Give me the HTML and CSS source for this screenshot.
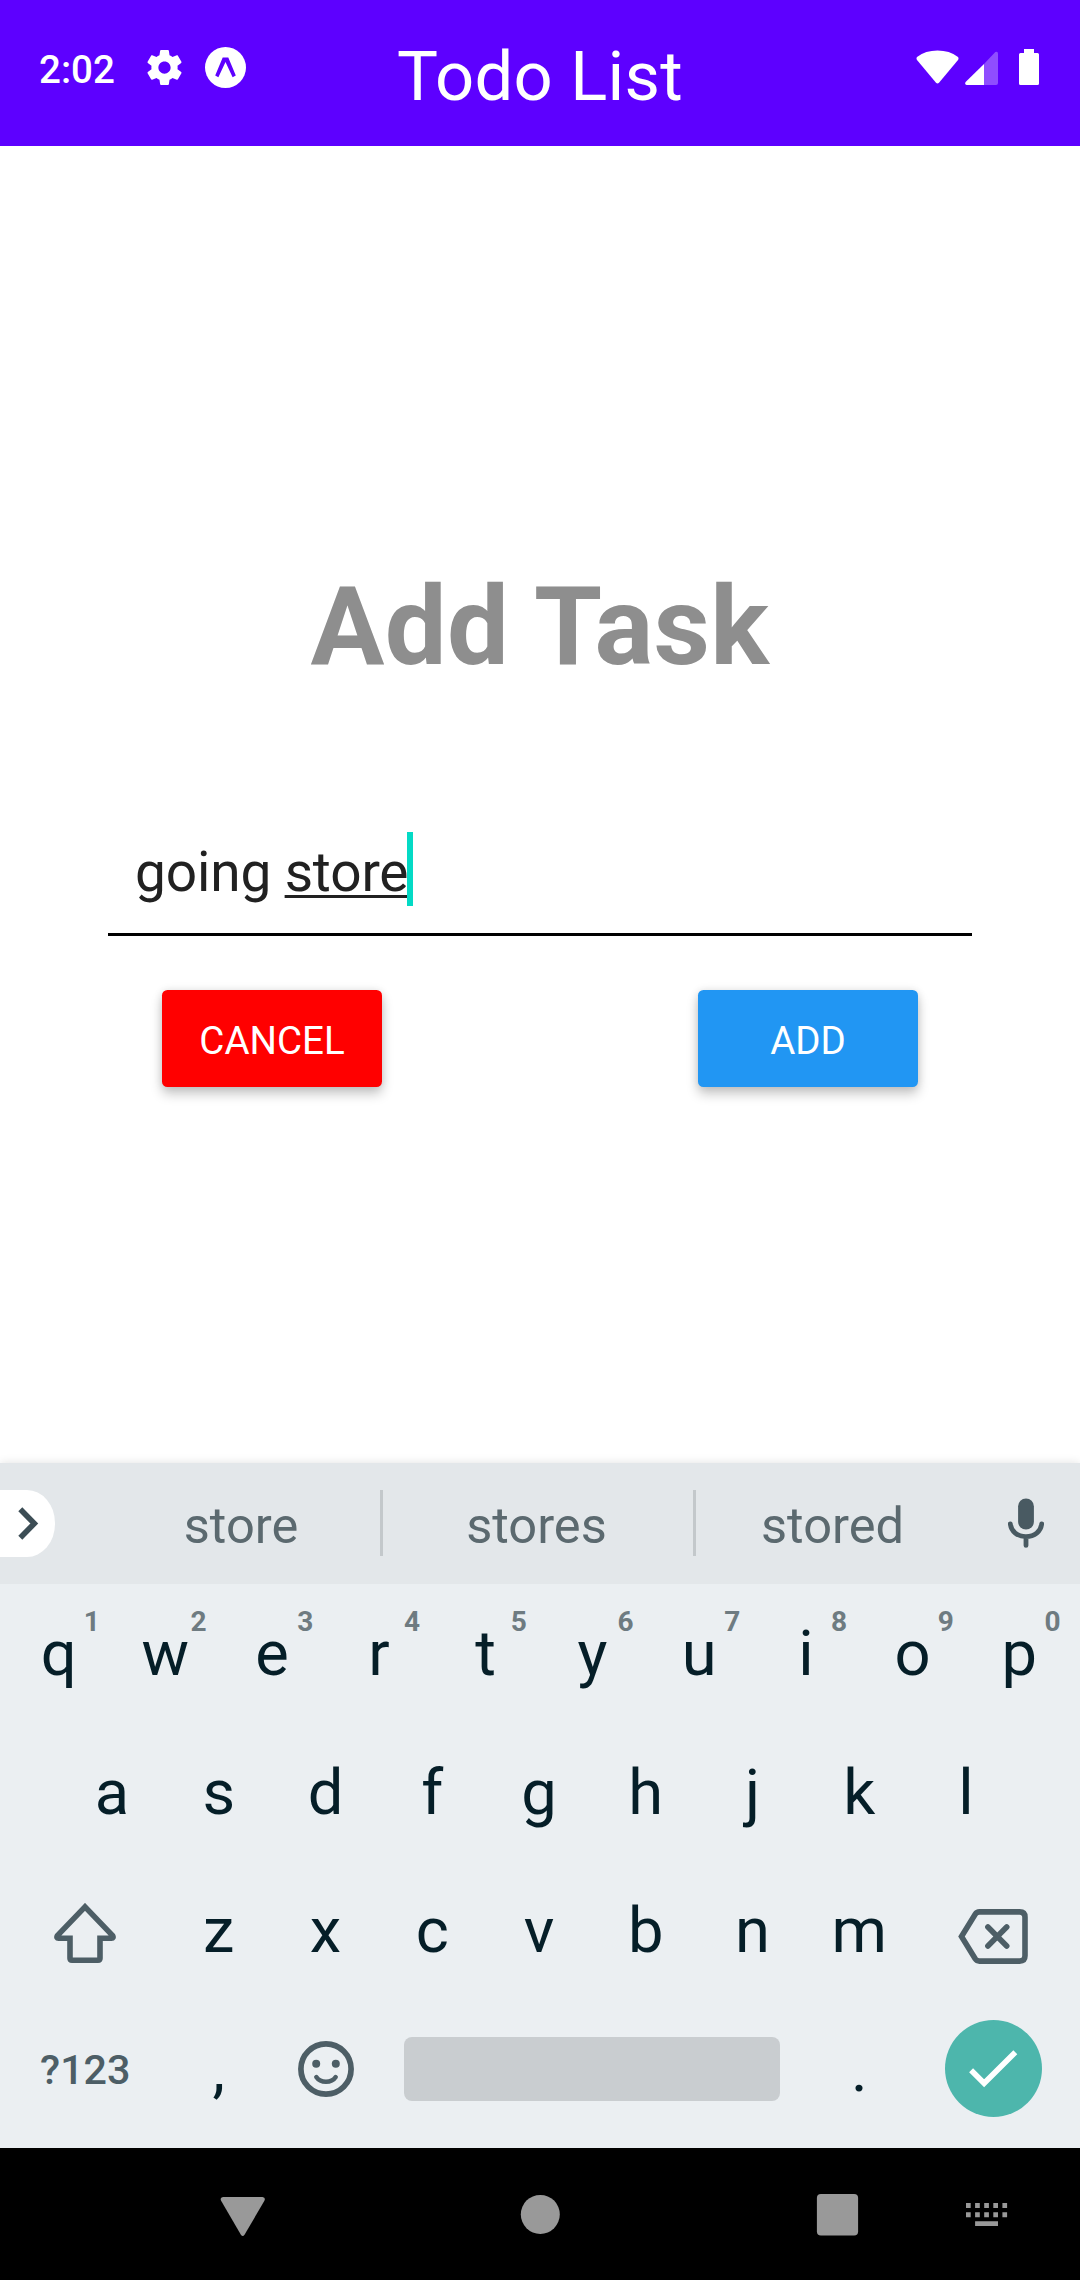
FILE: index.html
```html
<!DOCTYPE html>
<html lang="en">
<head>
<meta charset="utf-8">
<title>Todo List</title>
<link rel="stylesheet" href="styles.css">
</head>
<body>
<div class="screen">
  <header class="header">
    <div class="status-left">
      <span class="clock">2:02</span>
      <svg class="gear" viewBox="2 2 20 20"><path fill-rule="evenodd" d="M19.43 12.98c.04-.32.07-.64.07-.98s-.03-.66-.07-.98l2.11-1.65c.19-.15.24-.42.12-.64l-2-3.46c-.12-.22-.39-.3-.61-.22l-2.49 1c-.52-.4-1.08-.73-1.69-.98l-.38-2.65C14.46 2.18 14.25 2 14 2h-4c-.25 0-.46.18-.49.42l-.38 2.65c-.61.25-1.17.59-1.69.98l-2.49-1c-.23-.09-.49 0-.61.22l-2 3.46c-.13.22-.07.49.12.64l2.11 1.65c-.04.32-.07.65-.07.98s.03.66.07.98l-2.11 1.65c-.19.15-.24.42-.12.64l2 3.46c.12.22.39.3.61.22l2.49-1c.52.4 1.08.73 1.69.98l.38 2.65c.03.24.24.42.49.42h4c.25 0 .46-.18.49-.42l.38-2.65c.61-.25 1.17-.59 1.69-.98l2.49 1c.23.09.49 0 .61-.22l2-3.46c.12-.22.07-.49-.12-.64l-2.11-1.65zM12 15.5c-1.93 0-3.5-1.57-3.5-3.5s1.57-3.5 3.5-3.5 3.5 1.57 3.5 3.5-1.57 3.5-3.5 3.5z"/></svg>
      <svg class="expo" viewBox="0 0 41 41"><circle cx="20.5" cy="20.5" r="20.5"/><path class="expo-mark" d="M10.2 28.4 17.7 10.4H23.3L30.8 28.4 27.6 30.2 20.5 15 13.4 30.2Z"/></svg>
    </div>
    <h1 class="title">Todo List</h1>
    <div class="status-right">
      <svg class="wifi" viewBox="0 0 43 34"><path d="M1 7Q9.5.6 21.5.6T42 7Q43 8.3 42 10L23 32.8Q21.5 34.2 20 32.8L1 10Q0 8.3 1 7Z"/></svg>
      <svg class="signal" viewBox="0 0 33 34"><path class="signal-dim" d="M19 13 30.3 1Q33 0 33 2.8V32Q33 34 31 34H19Z"/><path d="M19 13V34H1.6Q-.6 33.2.6 31Z"/></svg>
      <svg class="battery" viewBox="0 0 20 36"><path d="M5 0H15V4H18.5Q20 4 20 5.5V34.5Q20 36 18.5 36H1.5Q0 36 0 34.5V5.5Q0 4 1.5 4H5Z"/></svg>
    </div>
  </header>

  <main class="content">
    <h2 class="heading">Add Task</h2>
    <div class="field"><span class="value">going <span class="composing">store</span></span><span class="caret"></span></div>
    <div class="actions">
      <button class="button cancel">CANCEL</button>
      <button class="button add">ADD</button>
    </div>
  </main>

  <section class="keyboard">
    <div class="suggestions">
      <div class="expand"><svg class="chevron" viewBox="0 0 21 33"><path d="M2.3 2.3 16.3 16.5 2.3 30.7"/></svg></div>
      <span class="word">store</span>
      <span class="divider"></span>
      <span class="word">stores</span>
      <span class="divider"></span>
      <span class="word last">stored</span>
      <svg class="mic" viewBox="0 0 36 50"><rect x="10.1" y="0.4" width="15.8" height="31.2" rx="7.9"/><path d="M2.3 25.8C3.2 33.6 9.4 38.6 18 38.6S32.8 33.6 33.7 25.8M18 38.6V47.4"/></svg>
    </div>
    <div class="row">
      <span class="key">q<i class="hint">1</i></span><span class="key">w<i class="hint">2</i></span><span class="key">e<i class="hint">3</i></span><span class="key">r<i class="hint">4</i></span><span class="key">t<i class="hint">5</i></span><span class="key">y<i class="hint">6</i></span><span class="key">u<i class="hint">7</i></span><span class="key">i<i class="hint">8</i></span><span class="key">o<i class="hint">9</i></span><span class="key">p<i class="hint">0</i></span>
    </div>
    <div class="row">
      <span class="key">a</span><span class="key">s</span><span class="key">d</span><span class="key">f</span><span class="key">g</span><span class="key">h</span><span class="key">j</span><span class="key">k</span><span class="key">l</span>
    </div>
    <div class="row">
      <span class="key wide"><svg class="shift" viewBox="0 0 62 60"><path d="M31 3.9 3.4 32.6Q2 35.2 4.6 35.2H16V55.2Q16 57.2 18 57.2H44Q46 57.2 46 55.2V35.2H57.4Q60 35.2 58.6 32.6Z"/></svg></span>
      <span class="key">z</span><span class="key">x</span><span class="key">c</span><span class="key">v</span><span class="key">b</span><span class="key">n</span><span class="key">m</span>
      <span class="key wide"><svg class="backspace" viewBox="0 0 70 55"><path d="M3.5 27.5 17.2 5.2Q18.7 2.9 21.5 2.9H61.6Q67 2.9 67 8.2V46.8Q67 52.1 61.6 52.1H21.5Q18.7 52.1 17.2 49.8ZM29.9 18 48.7 37M48.7 18 29.9 37"/></svg></span>
    </div>
    <div class="row">
      <span class="key wide symbols">?123</span>
      <span class="key">,</span>
      <span class="key"><svg class="emoji" viewBox="0 0 56 56"><circle class="line" cx="28" cy="28" r="25.1"/><circle cx="18.2" cy="22.8" r="4"/><circle cx="37.8" cy="22.8" r="4"/><path class="line smile" d="M18.3 36Q21.5 40.8 28 40.8T37.7 36"/></svg></span>
      <span class="key space"><span class="bar"></span></span>
      <span class="key">.</span>
      <span class="key wide"><span class="enter"><svg class="check" viewBox="0 0 49 38"><path d="M2.1 20.3 15.1 33.2 46.3 2.3"/></svg></span></span>
    </div>
  </section>

  <nav class="navbar">
    <svg class="nav-icons" viewBox="0 0 1080 132">
      <path d="M223 49H262.5Q265.9 49.6 264.4 52.8L244.5 86.8Q242.7 89.3 240.9 86.8L221.1 52.8Q219.6 49.6 223 49Z"/>
      <circle cx="540.3" cy="66.4" r="19.5"/>
      <rect x="816.9" y="46" width="41.2" height="41.6" rx="4"/>
      <path d="M966 55h4.7v5h-4.7zM975.1 55h4.7v5h-4.7zM984.2 55h4.7v5h-4.7zM993.3 55h4.7v5h-4.7zM1002.4 55h4.7v5h-4.7zM966 64.2h4.7v5h-4.7zM975.1 64.2h4.7v5h-4.7zM984.2 64.2h4.7v5h-4.7zM993.3 64.2h4.7v5h-4.7zM1002.4 64.2h4.7v5h-4.7zM975.1 73.2h22.9v4.9h-22.9z"/>
    </svg>
  </nav>
</div>
</body>
</html>
```

FILE: styles.css
```css
* { box-sizing: border-box; }

body {
  margin: 0;
  background: #fff;
  font-family: Roboto, sans-serif;
}

svg { display: block; flex: none; }

.screen {
  display: flex;
  flex-direction: column;
  width: 1080px;
  height: 2280px;
  overflow: hidden;
}

/* Header with the system status icons */
.header {
  display: grid;
  grid-template-columns: 1fr auto 1fr;
  height: 146px;
  flex: none;
  background: #5d00ff;
  color: #fff;
  fill: #fff;
}

.status-left {
  display: flex;
  align-items: flex-start;
  padding: 47px 0 0 39px;
}

.clock {
  width: 108px;
  font-size: 38.5px;
  font-weight: 500;
  line-height: 45px;
}

.gear { width: 35px; height: 35px; margin: 3px 23px 0 0; }
.expo { width: 41px; height: 41px; }
.expo-mark { fill: #5d00ff; }

.title {
  margin: 0;
  padding-top: 37px;
  font-size: 68.75px;
  font-weight: 400;
  letter-spacing: .25px;
  line-height: 80px;
}

.status-right {
  display: flex;
  justify-content: flex-end;
  align-items: flex-start;
  padding: 49px 41px 0 0;
}

.wifi { width: 43px; height: 34px; margin: 1px 6px 0 0; }
.signal { width: 33px; height: 34px; margin: 2px 21px 0 0; }
.signal-dim { fill: #8f4dff; }
.battery { width: 20px; height: 36px; }

/* Task form */
.content {
  display: flex;
  flex-direction: column;
  align-items: center;
  height: 1317px;
  flex: none;
}

.heading {
  margin: 416px 0 0;
  color: #8e8e8e;
  font-size: 110px;
  font-weight: 700;
  letter-spacing: .3px;
  line-height: 130px;
}

.field {
  display: flex;
  align-items: flex-start;
  width: 864px;
  height: 115px;
  margin-top: 129px;
  padding: 11px 27px 0;
  border-bottom: 3px solid #000;
  color: #212121;
  font-size: 55px;
  line-height: 74px;
  white-space: pre;
}

.value { padding-top: 3px; letter-spacing: -.15px; }

.composing {
  text-decoration: underline;
  text-decoration-thickness: 3px;
  text-decoration-skip-ink: none;
  text-underline-offset: 4px;
}

.caret { width: 6px; height: 74px; margin-left: -1px; background: #03dac5; }

.actions {
  display: flex;
  justify-content: space-between;
  width: 756px;
  margin-top: 54px;
}

.button {
  width: 220px;
  height: 97px;
  padding: 4px 0 0;
  border: 0;
  border-radius: 5.5px;
  box-shadow: 0 7px 12px rgba(0, 0, 0, .22), 0 0 8px rgba(0, 0, 0, .1);
  color: #fff;
  font: 400 38.5px/45px Roboto, sans-serif;
}

.cancel { background: #f00; }
.add { background: #2196f3; }

/* On-screen keyboard */
.keyboard {
  height: 685px;
  flex: none;
  background: #ebeff2;
  box-shadow: 0 0 9px rgba(0, 0, 0, .12);
}

.suggestions {
  display: flex;
  align-items: flex-start;
  height: 121px;
  padding-top: 27px;
  background: #e3e7ea;
}

.expand {
  width: 55px;
  height: 67px;
  margin-right: 48px;
  padding: 17px 0 0 17.5px;
  border-radius: 0 28px 28px 0 / 0 33px 33px 0;
  background: #fff;
}

.chevron {
  width: 21px;
  height: 33px;
  fill: none;
  stroke: #3c4d55;
  stroke-width: 5.6;
}

.word {
  width: 277px;
  margin-top: 3px;
  padding-right: 1px;
  color: #5b696f;
  font-size: 50.6px;
  line-height: 66px;
  text-align: center;
}

.word + .divider + .word { width: 310px; padding-right: 3px; }
.word + .divider + .last { width: 274px; padding-right: 1px; }

.divider { width: 3px; height: 66px; background: #c3c8cb; }

.mic {
  width: 36px;
  height: 50px;
  margin: 8px 0 0 38px;
  fill: #495a62;
}

.mic path {
  fill: none;
  stroke: #495a62;
  stroke-width: 4.8;
  stroke-linecap: round;
}

.row {
  display: flex;
  justify-content: center;
  height: 138.5px;
  padding: 0 7px 0 5px;
}

.key {
  position: relative;
  display: flex;
  justify-content: center;
  align-items: center;
  width: 106.75px;
  flex: none;
  color: #051e28;
  font-size: 63.25px;
  line-height: 138px;
}

.wide { width: 160.2px; }
.space { width: 427px; }

.hint {
  position: absolute;
  top: 21px;
  left: 73px;
  width: 27px;
  color: #6e7b81;
  font-size: 28px;
  font-style: normal;
  font-weight: 700;
  line-height: 34px;
  text-align: center;
}

.symbols {
  padding-top: 2px;
  color: #4d5e66;
  font-size: 41.25px;
  font-weight: 500;
}

.shift, .backspace {
  fill: none;
  stroke: #4d5e66;
  stroke-width: 5.6;
  stroke-linecap: round;
}

.shift { width: 62px; height: 60px; margin-top: 6px; }
.backspace { width: 70px; height: 55px; margin-top: 13px; }

.emoji { width: 56px; height: 56px; fill: #4d5e66; }
.emoji .line { fill: none; stroke: #4d5e66; stroke-width: 5.7; }
.emoji .smile { stroke-width: 4.5; stroke-linecap: round; }

.bar {
  width: 376px;
  height: 64px;
  border-radius: 8px;
  background: #c9cdd0;
}

.enter {
  display: flex;
  justify-content: center;
  align-items: center;
  width: 97px;
  height: 97px;
  margin-left: 2px;
  border-radius: 50%;
  background: #4db6ac;
}

.check {
  width: 49px;
  height: 38px;
  fill: none;
  stroke: #fff;
  stroke-width: 5.6;
}

/* System navigation bar */
.navbar { height: 132px; flex: none; background: #000; }
.nav-icons { width: 1080px; height: 132px; fill: #999; }
```
